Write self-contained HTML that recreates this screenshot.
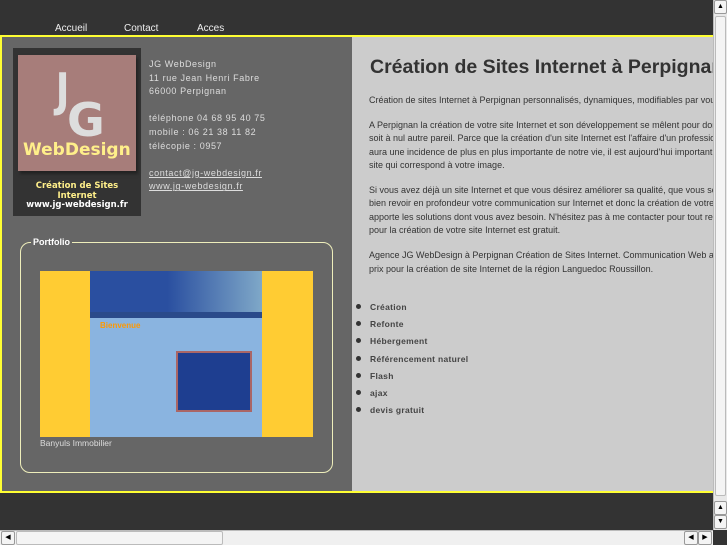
<!DOCTYPE html>
<html><head><meta charset="utf-8"><style>
*{margin:0;padding:0;box-sizing:border-box}
body{width:727px;height:545px;overflow:hidden;background:#333;font-family:"Liberation Sans",sans-serif;position:relative}
.nav{position:absolute;top:23px;font-size:10px;color:#eee}
.frame{position:absolute;left:0;top:35px;width:713px;height:458px;border:2px solid #ff3;border-right:none;background:#ccc;overflow:hidden}
.left{position:absolute;left:0;top:0;width:350px;height:454px;background:#666}
.logo{position:absolute;left:11px;top:11px;width:128px;height:168px;background:#333}
.sq{position:absolute;left:5px;top:7px;width:118px;height:116px;background:#a77d7a;box-shadow:2px 3px 3px #222}
.jg{position:absolute;color:#ddd;font-family:"DejaVu Sans",sans-serif;font-weight:bold}
.addr{position:absolute;left:147px;top:21px;font-size:9px;color:#ddd;line-height:13.6px;letter-spacing:.6px}
.addr a{color:#ddd;text-decoration:underline}
fieldset{position:absolute;left:18px;top:200px;width:313px;height:236px;border:1px solid #eeb;border-radius:10px}
legend{color:#fff;font-weight:bold;font-size:9px;margin-left:10px;padding:0 2px}
h1{position:absolute;left:368px;top:19px;font-size:19.5px;color:#333;white-space:nowrap}
.txt{position:absolute;left:367px;top:57px;width:346px;overflow:hidden;white-space:nowrap;font-size:9px;color:#333;line-height:13.4px}
.txt p{margin-bottom:11.5px}
ul{position:absolute;left:354px;top:265px;list-style:none;font-size:8.5px;font-weight:bold;color:#444;letter-spacing:.3px}
ul li{height:17.2px;position:relative;padding-left:14px}
ul li:before{content:"";position:absolute;left:0;top:2px;width:5px;height:5px;border-radius:50%;background:#333}
.vs{position:absolute;left:713px;top:0;width:14px;height:530px;background:#e8e8e8;border-left:1px solid #bbb}
.hs{position:absolute;left:0;top:530px;width:713px;height:15px;background:#f0f0f0;border-top:1px solid #bbb}
.btn{position:absolute;background:#f4f4f4;border:1px solid #999;border-radius:2px;font-size:7px;text-align:center;line-height:12px;color:#000}
</style></head><body>
<div class="nav" style="left:55px">Accueil</div>
<div class="nav" style="left:124px">Contact</div>
<div class="nav" style="left:197px">Acces</div>
<div class="frame">
<div class="left">
<div class="logo"><div class="sq">
<div class="jg" style="left:36px;top:8px;font-size:46px;transform:scaleX(.8)">J</div>
<div class="jg" style="left:49px;top:38px;font-size:46px">G</div>
<div class="jg" style="left:5px;top:85px;font-size:17px;color:#ffef8a">WebDesign</div>
</div>
<div style="position:absolute;top:134px;width:128px;text-align:center;font-family:'DejaVu Sans',sans-serif;font-weight:bold;font-size:8.5px;line-height:9.5px;color:#ffef8a">Création de Sites<br>Internet<br><span style="color:#fff">www.jg-webdesign.fr</span></div>
</div>
<div class="addr">JG WebDesign<br>11 rue Jean Henri Fabre<br>66000 Perpignan<br><br>téléphone 04 68 95 40 75<br>mobile : 06 21 38 11 82<br>télécopie : 0957<br><br><a>contact@jg-webdesign.fr</a><br><a>www.jg-webdesign.fr</a></div>
<fieldset><legend>Portfolio</legend></fieldset>
<div style="position:absolute;left:38px;top:234px;width:273px;height:166px;background:#fc3">
<div style="position:absolute;left:50px;top:0;width:172px;height:166px;background:#8ab4e0">
<div style="height:41px;background:linear-gradient(90deg,#2a4fa0 45%,#7fa8c8)"></div>
<div style="height:6px;background:#2a4a8a"></div>
<div style="position:absolute;left:10px;top:50px;color:#f90;font-size:8px;font-weight:bold">Bienvenue</div>
<div style="position:absolute;left:86px;top:80px;width:76px;height:61px;background:#1e3e90;border:2px solid #a66"></div>
</div></div>
<div style="position:absolute;left:38px;top:401px;font-size:8.5px;color:#ddd">Banyuls Immobilier</div>
</div>
<h1>Création de Sites Internet à Perpignan</h1>
<div class="txt">
<p>Création de sites Internet à Perpignan personnalisés, dynamiques, modifiables par vous-même</p>
<p>A Perpignan la création de votre site Internet et son développement se mêlent pour donner un<br>soit à nul autre pareil. Parce que la création d'un site Internet est l'affaire d'un professionnel<br>aura une incidence de plus en plus importante de notre vie, il est aujourd'hui important d'avoir un<br>site qui correspond à votre image.</p>
<p>Si vous avez déjà un site Internet et que vous désirez améliorer sa qualité, que vous souhaitiez<br>bien revoir en profondeur votre communication sur Internet et donc la création de votre site<br>apporte les solutions dont vous avez besoin. N'hésitez pas à me contacter pour tout renseignement<br>pour la création de votre site Internet est gratuit.</p>
<p>Agence JG WebDesign à Perpignan Création de Sites Internet. Communication Web au meilleur<br>prix pour la création de site Internet de la région Languedoc Roussillon.</p>
</div>
<ul><li>Création</li><li>Refonte</li><li>Hébergement</li><li>Référencement naturel</li><li>Flash</li><li>ajax</li><li>devis gratuit</li></ul>
</div>
<div class="vs">
<div class="btn" style="left:0;top:0;width:13px;height:14px">▲</div>
<div style="position:absolute;left:1px;top:16px;width:11px;height:480px;background:#f4f4f4;border:1px solid #bbb;border-radius:2px"></div>
<div class="btn" style="left:0;top:501px;width:13px;height:14px">▲</div>
<div class="btn" style="left:0;top:515px;width:13px;height:14px">▼</div>
</div>
<div class="hs">
<div class="btn" style="left:1px;top:0;width:14px;height:14px">◀</div>
<div style="position:absolute;left:16px;top:0;width:207px;height:14px;background:#f4f4f4;border:1px solid #bbb;border-radius:2px"></div>
<div class="btn" style="left:684px;top:0;width:14px;height:14px">◀</div>
<div class="btn" style="left:698px;top:0;width:14px;height:14px">▶</div>
</div>
</body></html>
